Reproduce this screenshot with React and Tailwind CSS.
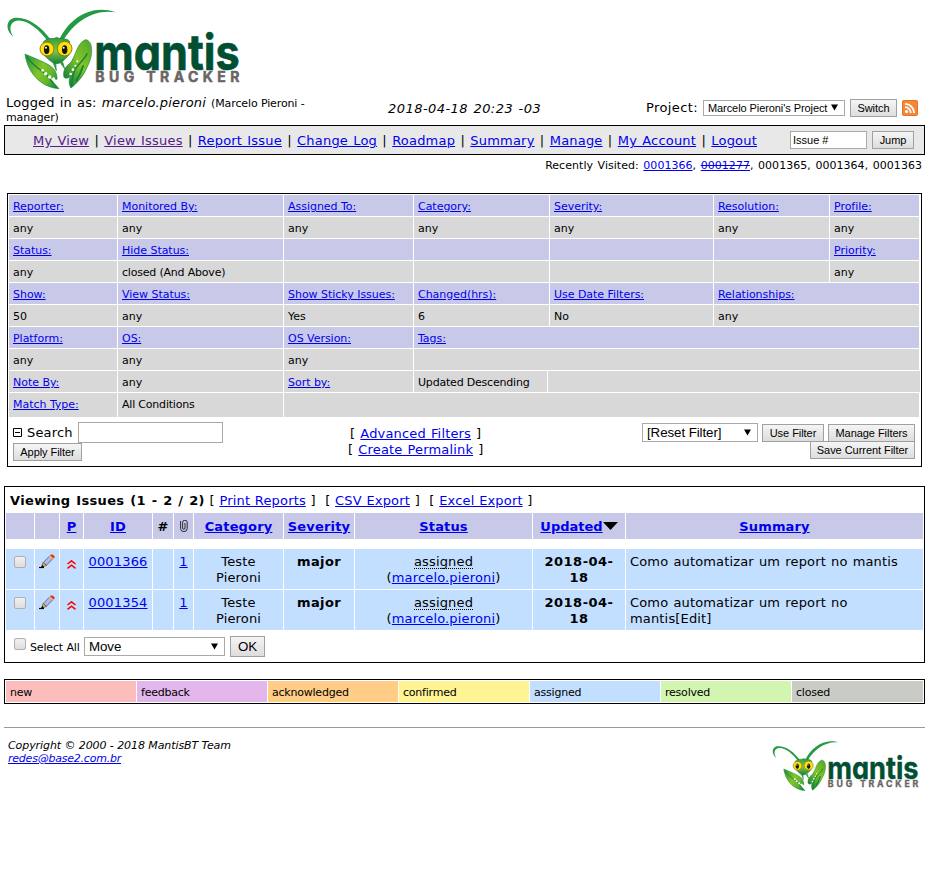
import React from "react";

const small = "text-[11px] leading-[13px]";

function Link({ children, className = "" }) {
  return <a className={`text-[#0000ee] underline ${className}`}>{children}</a>;
}

function Button({ children, className = "" }) {
  return (
    <button
      className={`shrink-0 whitespace-nowrap border border-[#a0a0a0] bg-linear-to-b from-[#f5f5f5] to-[#dddddd] p-0 text-center font-['Liberation_Sans',Arial,sans-serif] tracking-[-0.05px] text-black [word-spacing:0] ${className}`}
    >
      {children}
    </button>
  );
}

function Select({ children, className = "" }) {
  return (
    <div
      className={`flex shrink-0 items-center justify-between whitespace-nowrap border border-[#a9a9a9] bg-white pl-1 pr-[6px] font-['Liberation_Sans',Arial,sans-serif] tracking-[-0.08px] [word-spacing:0] ${className}`}
    >
      <span>{children}</span>
      <svg width="7" height="7" viewBox="0 0 7 7" className="-mt-px">
        <path d="M0 0.5H7L3.5 6.5Z" fill="#000" />
      </svg>
    </div>
  );
}

function Logo({ width, height }) {
  return (
    <svg width={width} height={height} viewBox="0 0 750 285" className="block overflow-visible tracking-normal">
      <defs>
        <linearGradient id="claw" x1="0" y1="0.2" x2="1" y2="0.8">
          <stop offset="0" stopColor="#2f9a3a" />
          <stop offset="0.45" stopColor="#84c528" />
          <stop offset="0.75" stopColor="#5fb52c" />
          <stop offset="1" stopColor="#128a3c" />
        </linearGradient>
        <linearGradient id="clawRight" x1="1" y1="0" x2="0.2" y2="1">
          <stop offset="0" stopColor="#4fa42e" />
          <stop offset="0.5" stopColor="#84c528" />
          <stop offset="1" stopColor="#0b7f3b" />
        </linearGradient>
        <linearGradient id="head" x1="0" y1="0" x2="0" y2="1">
          <stop offset="0" stopColor="#2b9a3a" />
          <stop offset="0.5" stopColor="#8cc63f" />
          <stop offset="1" stopColor="#138038" />
        </linearGradient>
      </defs>
      <path d="M156 124C120 72 74 48 42 54C16 61 17 92 40 110C25 88 30 66 50 62C80 58 116 86 147 128Z" fill="#259a44" />
      <path d="M176 122C206 58 270 10 348 37C280 25 222 66 188 124Z" fill="#259a44" />
      <path d="M75 162C95 172 150 190 162 208C168 215 172 228 171 238C160 237 150 232 142 226L177 266C120 262 82 215 75 162Z" fill="url(#claw)" stroke="#1a8a3a" strokeWidth="2" />
      <path d="M80 170C100 200 130 215 142 226L160 250" fill="none" stroke="#14803a" strokeWidth="4" />
      <path d="M257 119C280 122 280 168 262 200C250 230 230 250 213 264C206 252 206 238 212 228C205 236 198 236 192 232C188 215 195 200 210 190C228 170 230 128 257 119Z" fill="url(#clawRight)" stroke="#1a8a3a" strokeWidth="2" />
      <path d="M262 160C252 180 236 192 226 206C220 218 216 240 214 260" fill="none" stroke="#14803a" strokeWidth="4" />
      <path d="M250 196L240 222L228 244" fill="none" stroke="#0b7f3b" strokeWidth="5" />
      <path d="M157 182L169 212L167 190ZM182 190L194 206L188 186Z" fill="#3ba23c" stroke="#15803a" strokeWidth="2" />
      <g fill="#fff">
        <circle cx="128" cy="211" r="4" />
        <circle cx="137" cy="221" r="5" />
        <circle cx="149" cy="231" r="5" />
        <circle cx="161" cy="236" r="4" />
        <circle cx="232" cy="184" r="3" />
        <circle cx="226" cy="197" r="3" />
        <circle cx="219" cy="209" r="4" />
        <circle cx="212" cy="222" r="4" />
      </g>
      <path d="M130 126C144 110 158 120 170 112C184 120 198 112 209 124L207 164C196 178 184 190 170 191C156 190 144 178 130 162Z" fill="url(#head)" stroke="#15803a" strokeWidth="2" />
      <ellipse cx="141" cy="147" rx="21" ry="21" fill="#ffdf10" stroke="#6b6a12" strokeWidth="2.5" />
      <ellipse cx="194" cy="146" rx="22" ry="22" fill="#ffdf10" stroke="#6b6a12" strokeWidth="2.5" />
      <ellipse cx="140" cy="149" rx="8" ry="13" fill="#15150a" />
      <ellipse cx="194" cy="149" rx="8" ry="13" fill="#15150a" />
      <circle cx="138" cy="143" r="3" fill="#fff" />
      <circle cx="191" cy="143" r="3" fill="#fff" />
      <text x="283" y="209" textLength="436" lengthAdjust="spacingAndGlyphs" fill="#004f32" stroke="#004f32" strokeWidth="2" className="font-['Inter',sans-serif] text-[150px] font-bold [font-feature-settings:'cv11'] [word-spacing:0]">mantis</text>
      <text x="286" y="247" textLength="432" fill="#6b6464" stroke="#6b6464" strokeWidth="1.5" className="font-['Inter',sans-serif] text-[42px] font-bold [word-spacing:0]">BUG TRACKER</text>
    </svg>
  );
}

function Rss() {
  return (
    <svg width="16" height="16" viewBox="0 0 16 16" className="shrink-0">
      <rect width="16" height="16" rx="2" fill="#e9711c" />
      <rect x="1" y="1" width="14" height="14" rx="1.5" fill="#f08a3c" />
      <circle cx="4.5" cy="11.5" r="1.6" fill="#fff" />
      <path d="M3 7.2A5.8 5.8 0 0 1 8.8 13M3 3.9A9.1 9.1 0 0 1 12.1 13" fill="none" stroke="#fff" strokeWidth="1.8" />
    </svg>
  );
}

function Pencil() {
  return (
    <svg width="16" height="15" viewBox="0 0 16 15" className="block">
      <path d="M0 13.5H5" stroke="#000" strokeWidth="1.2" />
      <path d="M2.6 13L4 8.4L7.6 11.4Z" fill="#e8b84c" stroke="#4a3a10" strokeWidth=".6" />
      <path d="M4.4 8.4L10.4 2.2L13.6 4.9L7.4 11.2Z" fill="#b4b9ea" stroke="#50507c" strokeWidth=".8" />
      <path d="M10 2.4L11.2 1.2L14.6 4.2L13.4 5.4Z" fill="#f2c14e" />
      <path d="M11.2 1.2C12.6-.4 16.4 1.8 15.2 3.6L14.6 4.2Z" fill="#e0342a" stroke="#b3261e" strokeWidth=".4" />
      <path d="M2 13.8L3.4 11L5 12.6Z" fill="#000" />
    </svg>
  );
}

function Priority() {
  return (
    <svg width="9" height="9" viewBox="0 0 9 9" className="block">
      <path d="M.5 4L4.5 .8L8.5 4M.5 8.4L4.5 5.2L8.5 8.4" fill="none" stroke="#f00" strokeWidth="1.5" />
    </svg>
  );
}

function Clip() {
  return (
    <svg width="8" height="12" viewBox="0 0 8 12" className="block">
      <path d="M.6 1V8.5A3.2 3 0 0 0 7.2 8.5V2.5A2 2 0 0 0 2.6 2.5V8A1.2 1.2 0 0 0 5 8V3" fill="none" stroke="#000" strokeWidth=".8" />
    </svg>
  );
}

function Check() {
  return <span className="block size-[12px] rounded-[2px] border border-[#b0b0b0] bg-linear-to-b from-[#f0f0f0] to-[#dedede]" />;
}

const menu = ["My View", "View Issues", "Report Issue", "Change Log", "Roadmap", "Summary", "Manage", "My Account", "Logout"];

const seven = "grid-cols-[108px_165px_129px_135px_163px_115px_89px]";
const six = "grid-cols-[108px_165px_129px_135px_163px_205px]";
const four = "grid-cols-[108px_165px_129px_505px]";
const filterRows = [
  [seven, 1, ["Reporter:", "Monitored By:", "Assigned To:", "Category:", "Severity:", "Resolution:", "Profile:"]],
  [seven, 0, ["any", "any", "any", "any", "any", "any", "any"]],
  [seven, 1, ["Status:", "Hide Status:", "", "", "", "", "Priority:"]],
  [seven, 0, ["any", "closed (And Above)", "", "", "", "", "any"]],
  [six, 1, ["Show:", "View Status:", "Show Sticky Issues:", "Changed(hrs):", "Use Date Filters:", "Relationships:"]],
  [six, 0, ["50", "any", "Yes", "6", "No", "any"]],
  [four, 1, ["Platform:", "OS:", "OS Version:", "Tags:"]],
  [four, 0, ["any", "any", "any", ""]],
  ["grid-cols-[108px_165px_129px_133px_372px]", 0, ["Note By:", "any", "Sort by:", "Updated Descending", ""]],
  ["grid-cols-[108px_165px_635px]", 0, ["Match Type:", "All Conditions", ""]],
];

const issueCols = "grid grid-cols-[28px_24px_23px_68px_20px_19px_89px_70px_177px_92px_297px] gap-px";

function IssueRow({ id, summary }) {
  const cell = "bg-[#c2dfff] pt-[5px] text-center";
  return (
    <div className={`${issueCols} h-[40px] text-[13px] leading-4`}>
      <div className="flex justify-center bg-[#c2dfff] pt-[7px]"><Check /></div>
      <div className="flex justify-center bg-[#c2dfff] pt-[5px]"><Pencil /></div>
      <div className="flex justify-center bg-[#c2dfff] pt-[11px]"><Priority /></div>
      <div className={cell}><Link>{id}</Link></div>
      <div className={cell} />
      <div className={cell}><Link>1</Link></div>
      <div className={cell}>Teste<br />Pieroni</div>
      <div className={`${cell} font-bold tracking-[0.4px]`}>major</div>
      <div className={cell}>
        <span className="inline-block h-[15px] border-b border-dotted border-black leading-4">assigned</span>
        <br />(<Link>marcelo.pieroni</Link>)
      </div>
      <div className={`${cell} font-bold tracking-[0.5px]`}>2018-04-<br />18</div>
      <div className="bg-[#c2dfff] pl-1 pt-[5px]">{summary}</div>
    </div>
  );
}

const legend = [
  ["new", "bg-[#fcbdbd]"],
  ["feedback", "bg-[#e3b7eb]"],
  ["acknowledged", "bg-[#ffcd85]"],
  ["confirmed", "bg-[#fff494]"],
  ["assigned", "bg-[#c2dfff]"],
  ["resolved", "bg-[#d2f5b0]"],
  ["closed", "bg-[#c9ccc4]"],
];

export default function App() {
  return (
    <div className="h-[888px] w-[929px] overflow-hidden whitespace-nowrap bg-white font-['DejaVu_Sans',Verdana,sans-serif] text-[13px] leading-4 tracking-[0.16px] text-black [word-spacing:0.8px]">
      <div className="h-[95px]"><Logo width="250" height="95" /></div>

      <div className="flex h-[30px] pl-[6px]">
        <div className="w-[382px] pt-px leading-[13px]">
          Logged in as: <i>marcelo.pieroni</i> <span className="text-[11px] tracking-[-0.12px] [word-spacing:0]">(Marcelo Pieroni -<br />manager)</span>
        </div>
        <div className="w-[258px] pt-[6px] italic tracking-[0.45px]">2018-04-18 20:23 -03</div>
        <div className="flex pt-[5px]">
          <span className="w-[57px] tracking-[0.4px]">Project:</span>
          <Select className="h-[16px] w-[142px] text-[11px]">Marcelo Pieroni's Project</Select>
          <Button className="-mt-px ml-[5px] h-[18px] w-[47px] text-[11px]">Switch</Button>
          <span className="ml-[5px]"><Rss /></span>
        </div>
      </div>

      <div className="mx-1 flex h-[30px] items-center border border-black bg-[#e8e8e8]">
        <div className="flex w-[785px] pl-[28px] pt-[2px] tracking-[0.2px]">
          {menu.map((m, i) => (
            <React.Fragment key={m}>
              {i > 0 && <span className="w-[15.2px] text-center">|</span>}
              <a className={i < 2 ? "text-[#551a8b] underline" : "text-[#0000ee] underline"}>{m}</a>
            </React.Fragment>
          ))}
        </div>
        <div className="flex h-[18px] w-[77px] items-center border border-[#a9a9a9] bg-white pl-[2px] font-['Liberation_Sans',Arial,sans-serif] text-[11px] tracking-normal [word-spacing:0]">Issue #</div>
        <Button className="ml-[5px] h-[18px] w-[42px] text-[11px]">Jump</Button>
      </div>
      <div className={`mr-[7px] mt-[4px] h-[34px] text-right tracking-[0.04px] [word-spacing:1px] ${small}`}>
        Recently Visited: <Link>0001366</Link>, <a className="text-[#0000ee] [text-decoration-line:underline_line-through]">0001277</a>, 0001365, 0001364, 0001363
      </div>

      <div className="ml-[7px] h-[274px] w-[915px] border border-black p-px">
        <div className={`flex flex-col gap-px [word-spacing:0] ${small}`}>
          {filterRows.map(([cols, head, cells], r) => (
            <div key={r} className={`grid gap-px ${cols} ${r === 9 ? "h-[24px]" : "h-[21px]"}`}>
              {cells.map((c, i) => (
                <div key={i} className={`pl-1 pt-[5px] ${head ? "bg-[#c8c8e8]" : "bg-[#d8d8d8]"} ${c.length > 13 && !c.endsWith(":") ? "tracking-[-0.2px]" : "tracking-[-0.03px]"}`}>
                  {c.endsWith(":") ? <Link>{c}</Link> : c}
                </div>
              ))}
            </div>
          ))}
        </div>
        <div className="flex justify-between pl-1 pr-[5px] pt-[5px]">
          <div className="w-[337px]">
            <div className="flex h-[21px] items-center">
              <svg width="9" height="9" viewBox="0 0 9 9"><path d="M.5.5H8.5V8.5H.5ZM2 4.5H7" fill="none" stroke="#000" /></svg>
              <span className="ml-[5px] w-[51px]">Search</span>
              <span className="h-[21px] w-[145px] border border-[#a9a9a9] bg-white" />
            </div>
            <Button className="block h-[18px] w-[69px] text-[11px]">Apply Filter</Button>
          </div>
          <div className="flex-1 pt-[4px]">
            <div>[ <Link>Advanced Filters</Link> ]</div>
            <div className="-ml-[2px]">[ <Link>Create Permalink</Link> ]</div>
          </div>
          <div className="flex flex-col items-end pt-px">
            <div className="flex">
              <Select className="h-[19px] w-[116px] text-[13.33px]">[Reset Filter]</Select>
              <Button className="ml-1 mt-px h-[18px] w-[62px] text-[11px]">Use Filter</Button>
              <Button className="ml-1 mt-px h-[18px] w-[87px] text-[11px]">Manage Filters</Button>
            </div>
            <Button className="-mt-px h-[18px] w-[105px] text-[11px]">Save Current Filter</Button>
          </div>
        </div>
      </div>

      <div className="mx-1 mt-[19px] h-[177px] border border-black p-px">
        <div className="h-[25px] pl-1 pt-[5px] [word-spacing:0.4px]">
          <b className="tracking-[0.34px] [word-spacing:0.9px]">Viewing Issues (1 - 2 / 2)</b> [ <Link>Print Reports</Link> ]&nbsp; [ <Link>CSV Export</Link> ]&nbsp; [ <Link>Excel Export</Link> ]
        </div>
        <div className={`${issueCols} h-[26px] grid-rows-[26px] text-center font-bold leading-[28px] *:bg-[#c8c8e8]`}>
          <div /><div />
          <div><Link>P</Link></div>
          <div><Link>ID</Link></div>
          <div>#</div>
          <div className="flex justify-center pt-[7px]"><Clip /></div>
          <div><Link>Category</Link></div>
          <div><Link>Severity</Link></div>
          <div><Link>Status</Link></div>
          <div className="flex items-center justify-center tracking-normal">
            <span className="pt-[2px] leading-4"><Link>Updated</Link></span>
            <svg width="15" height="8" viewBox="0 0 15 8"><path d="M0 0H15L7.5 8Z" /></svg>
          </div>
          <div><Link>Summary</Link></div>
        </div>
        <div className="mt-[10px] flex flex-col gap-px">
          <IssueRow id="0001366" summary="Como automatizar um report no mantis" />
          <IssueRow id="0001354" summary={<>Como automatizar um report no<br />mantis[Edit]</>} />
        </div>
        <div className="flex pl-[8px] pt-[6px]">
          <span className="mt-[2px]"><Check /></span>
          <span className={`ml-[4px] mt-[5px] w-[54px] tracking-[-0.15px] [word-spacing:0] ${small}`}>Select All</span>
          <Select className="mt-px h-[19px] w-[141px] text-[13.33px]">Move</Select>
          <Button className="ml-[5px] h-[21px] w-[35px] text-[13.33px]">OK</Button>
        </div>
      </div>

      <div className={`mx-1 mt-[16px] grid h-[25px] grid-cols-[130px_130px_130px_130px_130px_130px_131px] gap-px border border-black p-px tracking-[-0.22px] ${small}`}>
        {legend.map(([name, bg]) => (
          <div key={name} className={`pl-1 pt-[5px] ${bg}`}>{name}</div>
        ))}
      </div>

      <div className="mx-1 mt-[23px] h-px bg-[#999]" />
      <div className="flex justify-between pl-[8px]">
        <div className={`pt-[11px] italic tracking-[-0.08px] [word-spacing:0] ${small}`}>
          Copyright © 2000 - 2018 MantisBT Team<br />
          <Link className="tracking-[-0.22px]">redes@base2.com.br</Link>
        </div>
        <div className="mr-[4px] mt-[7px]"><Logo width="157" height="59.7" /></div>
      </div>
    </div>
  );
}
